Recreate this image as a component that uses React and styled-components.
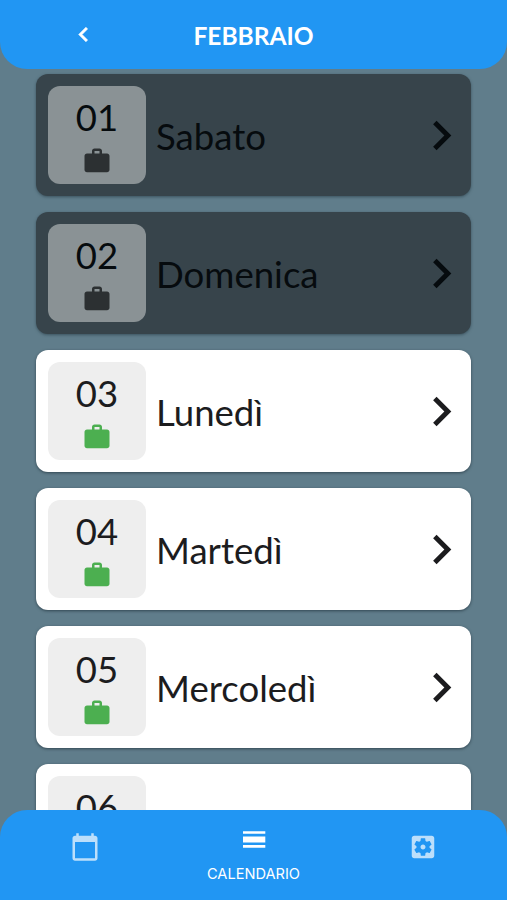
import React from 'react';
import styled, { createGlobalStyle } from 'styled-components';

const GlobalStyle = createGlobalStyle`
  * { box-sizing: border-box; }
  body { margin: 0; background: #607d8b; font-family: Lato, sans-serif; }
  button { padding: 0; border: 0; background: none; font: inherit; color: inherit; }
`;

const Screen = styled.div`
  display: grid;
  grid-template-rows: 69px 741px 90px;
  height: 900px;
  overflow: hidden;
  background: #607d8b;
`;

const Header = styled.header`
  display: grid;
  grid-template-columns: 166px 1fr 166px;
  align-items: center;
  height: 69px;
  background: #2196f3;
  color: #fff;
  border-radius: 0 0 27px 27px;
  z-index: 1;
`;

const BackButton = styled.button`
  display: flex;
  justify-self: center;
`;

const Title = styled.h1`
  margin: 3px 0 0;
  text-align: center;
  font-size: 24.5px;
  line-height: 30px;
  font-weight: 700;
`;

const DayList = styled.main`
  display: flex;
  flex-direction: column;
  gap: 16px;
  height: 831px;
  padding: 5px 36px 0;
  overflow: hidden;
`;

const DayCard = styled.article`
  display: flex;
  flex: none;
  align-items: center;
  justify-content: space-between;
  height: 122px;
  padding: 0 0 0 12px;
  border-radius: 12px;
  background: ${({ $past }) => ($past ? '#37444b' : '#fff')};
  color: ${({ $past }) => ($past ? '#060b0e' : '#1c1c1e')};
  box-shadow: 0 1px 3px ${({ $past }) => ($past ? 'rgba(35, 55, 65, 0.6)' : 'rgba(20, 35, 45, 0.6)')};
`;

const DateTile = styled.div`
  display: flex;
  flex-direction: column;
  align-items: center;
  width: 98px;
  height: 98px;
  padding-top: 8px;
  border-radius: 12px;
  background: ${({ $past }) => ($past ? '#8a9295' : '#eee')};
`;

const DateNumber = styled.span`
  font-size: 36.5px;
  line-height: 46px;
  height: 52px;
`;

const WorkIcon = styled.svg`
  width: 30px;
  height: 30px;
  fill: ${({ $past }) => ($past ? '#2c3032' : '#4caf50')};
`;

const DayName = styled.span`
  flex: 1;
  padding: 2px 0 0 10px;
  font-size: 36.6px;
  line-height: 48px;
`;

const Arrow = styled.svg`
  width: 59px;
  height: 59px;
  margin-right: 0.5px;
  fill: currentColor;
`;

const NavBar = styled.nav`
  display: grid;
  grid-template-columns: repeat(3, 1fr);
  height: 90px;
  background: #2196f3;
  border-radius: 27px 27px 0 0;
  color: #fff;
  z-index: 1;
`;

const NavItem = styled.button`
  display: flex;
  flex-direction: column;
  align-items: center;
  padding-top: ${({ $active }) => ($active ? '15px' : '22px')};
  color: ${({ $active }) => ($active ? '#fff' : '#bcdffb')};
`;

const NavIcon = styled.svg`
  width: 30px;
  height: 30px;
  fill: currentColor;
`;

const NavLabel = styled.span`
  margin-top: 9px;
  font-family: Inter, sans-serif;
  font-size: 14.6px;
  line-height: 20px;
`;

const days = [
  { date: '01', name: 'Sabato', past: true },
  { date: '02', name: 'Domenica', past: true },
  { date: '03', name: 'Lunedì' },
  { date: '04', name: 'Martedì' },
  { date: '05', name: 'Mercoledì' },
  { date: '06' },
];

function Day({ date, name, past }) {
  return (
    <DayCard $past={past}>
      <DateTile $past={past}>
        <DateNumber>{date}</DateNumber>
        <WorkIcon $past={past} viewBox="0 0 24 24">
          <path d="M20 6h-4V4c0-1.11-.89-2-2-2h-4c-1.11 0-2 .89-2 2v2H4c-1.11 0-2 .89-2 2v11c0 1.11.89 2 2 2h16c1.11 0 2-.89 2-2V8c0-1.11-.89-2-2-2zm-6 0h-4V4h4v2z" />
        </WorkIcon>
      </DateTile>
      {name && <DayName>{name}</DayName>}
      <Arrow viewBox="0 0 24 24">
        <path d="M10 6L8.59 7.41 13.17 12l-4.58 4.59L10 18l6-6z" />
      </Arrow>
    </DayCard>
  );
}

export default function App() {
  return (
    <>
      <GlobalStyle />
      <Screen>
        <Header>
          <BackButton aria-label="Indietro">
            <svg width="29" height="29" viewBox="0 0 24 24" fill="currentColor" stroke="currentColor" strokeWidth="0.5">
              <path d="M15.41 7.41L14 6l-6 6 6 6 1.41-1.41L10.83 12z" />
            </svg>
          </BackButton>
          <Title>FEBBRAIO</Title>
        </Header>
        <DayList>
          {days.map((day) => (
            <Day key={day.date} {...day} />
          ))}
        </DayList>
        <NavBar>
          <NavItem aria-label="Mese">
            <NavIcon viewBox="0 0 24 24">
              <path d="M20 3h-1V1h-2v2H7V1H5v2H4c-1.1 0-2 .9-2 2v16c0 1.1.9 2 2 2h16c1.1 0 2-.9 2-2V5c0-1.1-.9-2-2-2zm0 18H4V8h16v13z" />
            </NavIcon>
          </NavItem>
          <NavItem $active>
            <NavIcon viewBox="0 0 30 30">
              <path d="M4 6.2h22.3v2.6H4zM4 11.4h22.3v6.2H4zM4 20.1h22.3v2.6H4z" />
            </NavIcon>
            <NavLabel>CALENDARIO</NavLabel>
          </NavItem>
          <NavItem aria-label="Impostazioni">
            <NavIcon viewBox="0 0 24 24">
              <path d="M12 10c-1.1 0-2 .9-2 2s.9 2 2 2 2-.9 2-2-.9-2-2-2zm7-7H5c-1.11 0-2 .9-2 2v14c0 1.1.89 2 2 2h14c1.11 0 2-.9 2-2V5c0-1.1-.89-2-2-2zm-1.75 9c0 .23-.02.46-.05.68l1.48 1.16c.13.11.17.3.08.45l-1.4 2.42c-.09.15-.27.21-.43.15l-1.74-.7c-.36.28-.76.51-1.18.69l-.26 1.85c-.03.17-.18.3-.35.3h-2.8c-.17 0-.32-.13-.35-.29l-.26-1.85c-.43-.18-.82-.41-1.18-.69l-1.74.7c-.16.06-.34 0-.43-.15l-1.4-2.42c-.09-.15-.05-.34.08-.45l1.48-1.16c-.03-.23-.05-.46-.05-.69s.02-.46.05-.68l-1.48-1.16c-.13-.11-.17-.3-.08-.45l1.4-2.42c.09-.15.27-.21.43-.15l1.74.7c.36-.28.76-.51 1.18-.69l.26-1.85c.03-.17.18-.3.35-.3h2.8c.17 0 .32.13.35.29l.26 1.85c.43.18.82.41 1.18.69l1.74-.7c.16-.06.34 0 .43.15l1.4 2.42c.09.15.05.34-.08.45l-1.48 1.16c.03.23.05.46.05.69z" />
            </NavIcon>
          </NavItem>
        </NavBar>
      </Screen>
    </>
  );
}
